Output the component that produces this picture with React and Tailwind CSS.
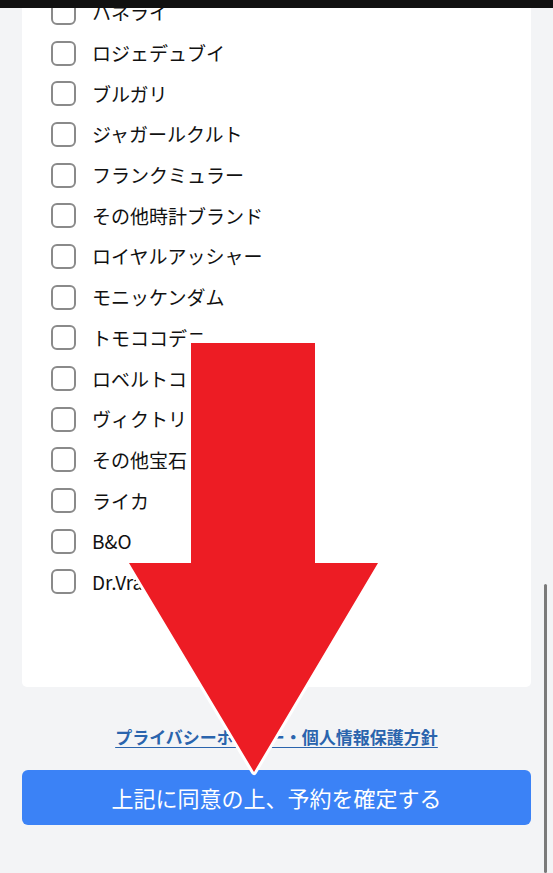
import React from 'react';

const brands = [
  'ハネライ',
  'ロジェデュブイ',
  'ブルガリ',
  'ジャガールクルト',
  'フランクミュラー',
  'その他時計ブランド',
  'ロイヤルアッシャー',
  'モニッケンダム',
  'トモココデニ',
  'ロベルトコイン',
  'ヴィクトリアン',
  'その他宝石ブランド',
  'ライカ',
  'B&O',
  'Dr.Vranjes',
];

const App = () => {
  return (
    <div
      className="relative h-[873px] w-[553px] overflow-hidden bg-[#f3f4f6]"
      style={{ fontFamily: '"Noto Sans CJK JP", "Noto Sans", sans-serif' }}
    >
      {/* Brand list card */}
      <div className="mx-[22px] -mt-[20px] rounded-[5px] bg-white pt-[12px] pb-[85px] pl-[29px]">
        {brands.map((name) => (
          <label key={name} className="flex h-[40.7px] items-center gap-[16px]">
            <span className="h-[25px] w-[25px] shrink-0 rounded-[6px] border-2 border-[#8a8a8a] bg-white"></span>
            <span className="-mt-[1px] text-[19px] leading-none text-[#111]">{name}</span>
          </label>
        ))}
      </div>

      {/* Privacy link */}
      <div className="mt-[37px] flex h-[24px] items-center justify-center">
        <a className="text-[17px] font-bold text-[#2a64ad] underline underline-offset-[3px]">
          プライバシーポリシー・個人情報保護方針
        </a>
      </div>

      {/* Submit */}
      <div className="mx-[22px] mt-[22px]">
        <button className="flex h-[55px] w-full items-center justify-center rounded-[6px] bg-[#3b82f6] text-[22px] text-white">
          上記に同意の上、予約を確定する
        </button>
      </div>

      {/* Status bar */}
      <div className="absolute inset-x-0 top-0 h-[8px] bg-[#111]"></div>

      {/* Scrollbar */}
      <div className="absolute right-[6px] top-[584px] bottom-0 w-[3px] rounded-full bg-[#7a7a7a]"></div>

      {/* Annotation arrow */}
      <svg className="pointer-events-none absolute left-0 top-0" width="553" height="873" viewBox="0 0 553 873">
        <polygon
          points="191,343 315,343 315,563 378,563 254,772 129,563 191,563"
          fill="#ed1c24"
          stroke="#ffffff"
          strokeWidth="6"
          strokeLinejoin="round"
          paintOrder="stroke"
        />
      </svg>
    </div>
  );
};

export default App;
